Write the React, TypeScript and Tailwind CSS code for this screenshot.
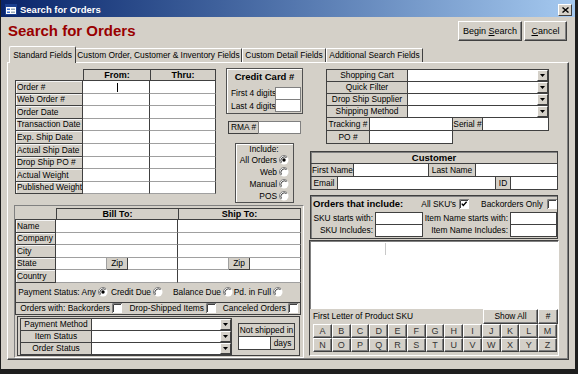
import React from "react";

const F = "font-['Liberation_Sans',Arial,sans-serif]";
const B = "font-['Liberation_Sans',Arial,sans-serif] font-bold";
const LAB =
  "bg-[#d4d0c8] border border-[#404040] flex items-center justify-center whitespace-nowrap overflow-hidden";
const RAISED =
  "bg-[#d4d0c8] border border-t-white border-l-white border-r-[#404040] border-b-[#404040] shadow-[inset_-1px_-1px_0_#808080]";

function Radio({ checked = false }: { checked?: boolean }) {
  return (
    <svg width="10" height="10" viewBox="0 0 10 10" className="shrink-0">
      <circle cx="5" cy="5" r="4.5" fill="#fff" />
      <path d="M1.8 8.2 A4.5 4.5 0 0 1 8.2 1.8" stroke="#808080" strokeWidth="1" fill="none" />
      <path d="M2.5 7.5 A3.6 3.6 0 0 1 7.5 2.5" stroke="#404040" strokeWidth="1" fill="none" />
      {checked && <circle cx="5" cy="5" r="1.7" fill="#000" />}
    </svg>
  );
}

function Check({ checked = false }: { checked?: boolean }) {
  return (
    <svg width="10" height="10" viewBox="0 0 10 10" className="shrink-0">
      <rect x="0" y="0" width="10" height="10" fill="#fff" />
      <path d="M0.5 10V0.5H10" stroke="#808080" fill="none" />
      <path d="M1.5 9V1.5H9" stroke="#404040" fill="none" />
      {checked && <path d="M2.8 4.6 L4.3 6.4 L7.6 2.8" stroke="#000" strokeWidth="1.4" fill="none" />}
    </svg>
  );
}

function DropBtn() {
  return (
    <div className="w-[11px] h-full bg-[#d4d0c8] border border-t-white border-l-white border-r-[#404040] border-b-[#404040] flex items-center justify-center shrink-0">
      <svg width="5" height="3" viewBox="0 0 5 3">
        <path d="M0 0H5L2.5 3Z" fill="#000" />
      </svg>
    </div>
  );
}

export default function App() {
  const fromRows = [
    "Order #",
    "Web Order #",
    "Order Date",
    "Transaction Date",
    "Exp. Ship Date",
    "Actual Ship Date",
    "Drop Ship PO #",
    "Actual Weight",
    "Published Weight",
  ];
  const addrRows = ["Name", "Company", "City", "State", "Country"];
  const letters = "ABCDEFGHIJKLMNOPQRSTUVWXYZ".split("");

  return (
    <div className={`w-[578px] h-[374px] bg-[#1e1e1e] overflow-hidden ${F} text-[8.4px] leading-none text-black whitespace-nowrap`}>
      <div className="ml-[1px] w-[574px] h-[369px] bg-[#d4d0c8] flex flex-col">
        {/* Title bar */}
        <div className="h-[17px] flex items-center bg-linear-to-r from-[#0a246a] to-[#a6caf0] pl-[4px] pr-[2px]">
          <svg width="12" height="11" viewBox="0 0 12 11" className="mt-[2px]">
            <rect x="0.5" y="0.5" width="11" height="10" fill="#fff" stroke="#1b3f8f" />
            <rect x="1" y="1" width="10" height="2" fill="#1b3f8f" />
            <rect x="2" y="4.5" width="3" height="1.5" fill="#3a6fd0" />
            <rect x="6" y="4.5" width="4" height="1.5" fill="#9ab" />
            <rect x="2" y="7.5" width="3" height="1.5" fill="#3a6fd0" />
            <rect x="6" y="7.5" width="4" height="1.5" fill="#9ab" />
          </svg>
          <span className={`${B} text-[9.5px] text-white ml-[3px] mt-[2px]`}>Search for Orders</span>
          <div className="ml-auto mr-[1px] mt-[2px] w-[14px] h-[12px] bg-[#d4d0c8] border border-t-white border-l-white border-r-[#404040] border-b-[#404040] flex items-center justify-center">
            <svg width="7" height="6" viewBox="0 0 7 6">
              <path d="M0.5 0.5L6.5 5.5M6.5 0.5L0.5 5.5" stroke="#000" strokeWidth="1.4" />
            </svg>
          </div>
        </div>

        {/* Header */}
        <div className="h-[29px] flex items-start">
          <div className={`${B} text-[15px] text-[#990000] ml-[7px] mt-[6px]`}>Search for Orders</div>
          <div className="ml-auto mr-[8px] mt-[4px] flex gap-[2px] text-[9px]">
            <div className={`${RAISED} w-[64px] h-[20px] flex items-center justify-center`}>
              Begin&nbsp;<span className="underline">S</span>earch
            </div>
            <div className={`${RAISED} w-[43px] h-[20px] flex items-center justify-center`}>
              <span className="underline">C</span>ancel
            </div>
          </div>
        </div>

        {/* Tabs */}
        <div className="h-[16px] flex items-end pl-[8px]">
          <div className="relative z-10 -mb-px h-[17px] w-[67px] bg-[#d4d0c8] border-t border-l border-r border-t-white border-l-white border-r-[#404040] rounded-t-[2px] flex items-center justify-center">
            Standard Fields
          </div>
          <div className="h-[14px] w-[166px] border-t border-r border-t-white border-r-[#404040] flex items-center justify-center">
            Custom Order, Customer &amp; Inventory Fields
          </div>
          <div className="h-[14px] w-[84px] border-t border-l border-r border-t-white border-l-white border-r-[#404040] flex items-center justify-center">
            Custom Detail Fields
          </div>
          <div className="h-[14px] w-[97px] border-t border-l border-r border-t-white border-l-white border-r-[#404040] flex items-center justify-center">
            Additional Search Fields
          </div>
        </div>

        {/* Tab page */}
        <div className="ml-[6px] w-[562px] h-[298px] border border-t-white border-l-white border-r-[#404040] border-b-[#404040] shadow-[inset_-1px_-1px_0_#808080] flex pl-[5px]">
          {/* Left column */}
          <div className="w-[292px] flex flex-col">
            <div className="h-[142px] flex">
              {/* From / Thru grid */}
              <div className="ml-[2px] mt-[6px] w-[201px]">
                <div className="flex h-[11px]">
                  <div className="w-[68px]" />
                  <div className={`${B} text-[9px] w-[67px] border-t border-l border-[#404040] flex items-center justify-center`}>
                    From:
                  </div>
                  <div className={`${B} text-[9px] w-[66px] border-t border-l border-r border-[#404040] flex items-center justify-center`}>
                    Thru:
                  </div>
                </div>
                <div className="border-t border-l border-[#404040]">
                  {fromRows.map((r, i) => (
                    <div key={r} className="flex h-[12.6px]">
                      <div className="w-[67px] border-r border-b border-[#404040] shadow-[inset_1px_1px_0_#f4f4f4] flex items-center pl-[1px] overflow-hidden">
                        {r}
                      </div>
                      <div className="w-[67px] bg-white border-r border-b border-r-[#404040] border-b-[#a0a0a0] relative">
                        {i === 0 && <div className="absolute left-[34px] top-[2px] w-px h-[9px] bg-black" />}
                      </div>
                      <div className="w-[66px] bg-white border-r border-b border-r-[#404040] border-b-[#a0a0a0]" />
                    </div>
                  ))}
                </div>
              </div>

              {/* Middle column */}
              <div className="ml-[10px] mt-[5px] w-[77px] flex flex-col">
                <div className="h-[46px] border border-[#505050] shadow-[inset_1px_1px_0_#fff]">
                  <div className={`${B} text-[9.5px] h-[15px] flex items-center justify-center`}>Credit Card #</div>
                  <div className="mt-[3px] flex h-[13px] items-center">
                    <div className="w-[48px] pl-[4px]">First 4 digits</div>
                    <div className="w-[26px] h-[13px] bg-white border border-[#808080]" />
                  </div>
                  <div className="flex h-[12px] items-center">
                    <div className="w-[48px] pl-[4px]">Last 4 digits</div>
                    <div className="w-[26px] h-[13px] -mt-px bg-white border border-[#808080]" />
                  </div>
                </div>
                <div className="ml-[2px] mt-[7px] flex h-[13px]">
                  <div className={`${LAB} w-[31px] justify-start pl-[2px]`}>RMA #</div>
                  <div className="-ml-px w-[43px] bg-white border border-[#808080]" />
                </div>
                <div className="ml-[9px] mt-[9px] w-[59px] h-[60px] border border-[#505050] shadow-[inset_1px_1px_0_#fff] flex flex-col pr-[4px]">
                  <div className="h-[9px] mt-[1px] flex items-center justify-center pl-[3px]">Include:</div>
                  {[
                    ["All Orders", true],
                    ["Web", false],
                    ["Manual", false],
                    ["POS", false],
                  ].map(([t, c]) => (
                    <div key={t as string} className="h-[12px] flex items-center justify-end gap-[2px]">
                      <span>{t as string}</span>
                      <Radio checked={c as boolean} />
                    </div>
                  ))}
                </div>
              </div>
            </div>

            {/* Bottom left group */}
            <div className="ml-[1px] w-[290px] h-[153px] border border-t-[#808080] border-l-[#808080] border-r-white border-b-white flex flex-col">
              <div className="mt-[2px] w-[286px]">
                <div className="flex h-[11px]">
                  <div className="w-[41px]" />
                  <div className={`${B} text-[9px] w-[122px] border-t border-l border-[#404040] flex items-center justify-center`}>
                    Bill To:
                  </div>
                  <div className={`${B} text-[9px] w-[123px] border-t border-l border-r border-[#404040] flex items-center justify-center`}>
                    Ship To:
                  </div>
                </div>
                <div className="border-t border-l border-[#404040]">
                  {addrRows.map((r) => (
                    <div key={r} className="flex h-[12.6px]">
                      <div className="w-[40px] border-r border-b border-[#404040] shadow-[inset_1px_1px_0_#f4f4f4] flex items-center pl-[1px]">
                        {r}
                      </div>
                      {r === "State" ? (
                        <>
                          <div className="w-[51px] bg-white border-r border-b border-r-[#a0a0a0] border-b-[#a0a0a0]" />
                          <div className="w-[21px] border-r border-b border-[#404040] flex items-center justify-center">Zip</div>
                          <div className="w-[50px] bg-white border-r border-b border-r-[#404040] border-b-[#a0a0a0]" />
                          <div className="w-[51px] bg-white border-r border-b border-r-[#a0a0a0] border-b-[#a0a0a0]" />
                          <div className="w-[21px] border-r border-b border-[#404040] flex items-center justify-center">Zip</div>
                          <div className="w-[51px] bg-white border-r border-b border-r-[#404040] border-b-[#a0a0a0]" />
                        </>
                      ) : (
                        <>
                          <div className="w-[122px] bg-white border-r border-b border-r-[#404040] border-b-[#a0a0a0]" />
                          <div className="w-[123px] bg-white border-r border-b border-r-[#404040] border-b-[#a0a0a0]" />
                        </>
                      )}
                    </div>
                  ))}
                </div>
                <div className="h-[20px] border-l border-r border-b border-[#404040] flex items-center pl-[1px]">
                  <div className="w-[91px] flex items-center justify-end gap-[2px]">
                    <span>Payment Status: Any</span>
                    <Radio checked />
                  </div>
                  <div className="w-[55px] flex items-center justify-end gap-[2px]">
                    <span>Credit Due</span>
                    <Radio />
                  </div>
                  <div className="w-[70px] flex items-center justify-end gap-[2px]">
                    <span>Balance Due</span>
                    <Radio />
                  </div>
                  <div className="w-[50px] flex items-center justify-end gap-[2px]">
                    <span>Pd. in Full</span>
                    <Radio />
                  </div>
                </div>
                <div className="h-[12px] border-l border-r border-b border-[#404040] flex items-center">
                  <div className="w-[106px] flex items-center justify-end gap-[2px]">
                    <span>Orders with: Backorders</span>
                    <Check />
                  </div>
                  <div className="w-[94px] flex items-center justify-end gap-[2px]">
                    <span>Drop-Shipped Items</span>
                    <Check />
                  </div>
                  <div className="w-[82px] flex items-center justify-end gap-[2px]">
                    <span>Canceled Orders</span>
                    <Check />
                  </div>
                </div>
              </div>

              <div className="ml-[2px] mt-[1px] w-[283px] h-[40px] border border-[#404040] flex pt-[1px] pl-[2px]">
                <div className="flex flex-col">
                  {["Payment Method", "Item Status", "Order Status"].map((t, i) => (
                    <div key={t} className={`flex h-[13px] ${i ? "-mt-px" : ""}`}>
                      <div className={`${LAB} w-[72px]`}>{t}</div>
                      <div className="-ml-px w-[141px] bg-white border border-[#404040] flex justify-end">
                        <DropBtn />
                      </div>
                    </div>
                  ))}
                </div>
                <div className="ml-[6px] mt-[5px] flex flex-col">
                  <div className={`${LAB} w-[57px] h-[14px]`}>Not shipped in</div>
                  <div className="flex -mt-px h-[14px]">
                    <div className="w-[33px] bg-white border border-[#404040]" />
                    <div className={`${LAB} -ml-px w-[25px]`}>days</div>
                  </div>
                </div>
              </div>
            </div>
          </div>

          {/* Right column */}
          <div className="ml-[3px] w-[252px] flex flex-col">
            <div className="ml-[18px] mt-[6px] w-[223px] flex flex-col">
              {["Shopping Cart", "Quick Filter", "Drop Ship Supplier", "Shipping Method"].map((t, i) => (
                <div key={t} className={`flex h-[13px] ${i ? "-mt-px" : ""}`}>
                  <div className={`${LAB} w-[82px]`}>{t}</div>
                  <div className="-ml-px w-[142px] bg-white border border-[#404040] flex justify-end">
                    <DropBtn />
                  </div>
                </div>
              ))}
              <div className="flex h-[14px] -mt-px">
                <div className={`${LAB} w-[44px]`}>Tracking #</div>
                <div className="-ml-px w-[84px] bg-white border border-[#404040]" />
                <div className={`${LAB} -ml-px w-[31px]`}>Serial #</div>
                <div className="-ml-px w-[67px] bg-white border border-[#404040]" />
              </div>
              <div className="flex h-[14px] -mt-px">
                <div className={`${LAB} w-[44px]`}>PO #</div>
                <div className="-ml-px w-[84px] bg-white border border-[#404040]" />
              </div>
            </div>

            {/* Customer */}
            <div className="ml-[2px] mt-[7px] w-[248px] border border-[#404040] shadow-[inset_1px_1px_0_#808080]">
              <div className={`${B} text-[9.5px] h-[12px] flex items-center justify-center border-b border-[#404040]`}>
                Customer
              </div>
              <div className="flex h-[13px] border-b border-[#404040]">
                <div className="w-[43px] border-r border-[#404040] flex items-center pl-[1px]">First Name</div>
                <div className="w-[75px] bg-white border-r border-[#404040]" />
                <div className="w-[47px] border-r border-[#404040] flex items-center justify-center">Last Name</div>
                <div className="flex-1 bg-white" />
              </div>
              <div className="flex h-[12px]">
                <div className="w-[27px] border-r border-[#404040] flex items-center justify-center">Email</div>
                <div className="w-[158px] bg-white border-r border-[#404040]" />
                <div className="w-[15px] border-r border-[#404040] flex items-center justify-center">ID</div>
                <div className="flex-1 bg-white" />
              </div>
            </div>

            {/* Orders that include */}
            <div className="ml-[2px] mt-[5px] w-[248px] h-[44px] border border-[#404040] shadow-[inset_1px_1px_0_#808080] flex flex-col">
              <div className="h-[16px] flex items-center">
                <div className={`${B} text-[9.5px] w-[100px] pl-[2px]`}>Orders that include:</div>
                <div className="w-[58px] flex items-center justify-end gap-[3px]">
                  <span>All SKU's</span>
                  <Check checked />
                </div>
                <div className="w-[88px] flex items-center justify-end gap-[4px]">
                  <span>Backorders Only</span>
                  <Check />
                </div>
              </div>
              {[
                ["SKU starts with:", "Item Name starts with:"],
                ["SKU Includes:", "Item Name Includes:"],
              ].map(([a, b], i) => (
                <div key={a} className={`flex h-[13px] ${i ? "-mt-px" : ""}`}>
                  <div className="w-[64px] flex items-center justify-end pr-[2px]">{a}</div>
                  <div className="w-[48px] bg-white border border-[#404040]" />
                  <div className="w-[87px] flex items-center justify-end pr-[2px]">{b}</div>
                  <div className="w-[47px] bg-white border border-[#404040]" />
                </div>
              ))}
            </div>

            {/* List + letters */}
            <div className="ml-[1px] mt-[1px] w-[250px] h-[116px] border border-t-[#404040] border-l-[#404040] border-r-white border-b-white flex flex-col">
              <div className="h-[68px] bg-white border-t border-l border-[#808080] relative">
                <div className="absolute left-[74px] top-[1px] w-px h-[12px] bg-[#c8c8c8]" />
              </div>
              <div className="h-[15px] flex items-center">
                <span className="ml-[3px]">First Letter of Product SKU</span>
                <div className={`${RAISED} ml-auto w-[55px] h-[15px] flex items-center justify-center`}>Show All</div>
                <div className={`${RAISED} w-[20px] h-[15px] flex items-center justify-center`}>#</div>
              </div>
              <div className="ml-[3px] mr-[1px] grid grid-cols-[repeat(13,minmax(0,1fr))]">
                {letters.map((l) => (
                  <div key={l} className={`${RAISED} h-[14px] flex items-center justify-center text-[#333] text-[9px]`}>
                    {l}
                  </div>
                ))}
              </div>
            </div>
          </div>
        </div>
      </div>
    </div>
  );
}
